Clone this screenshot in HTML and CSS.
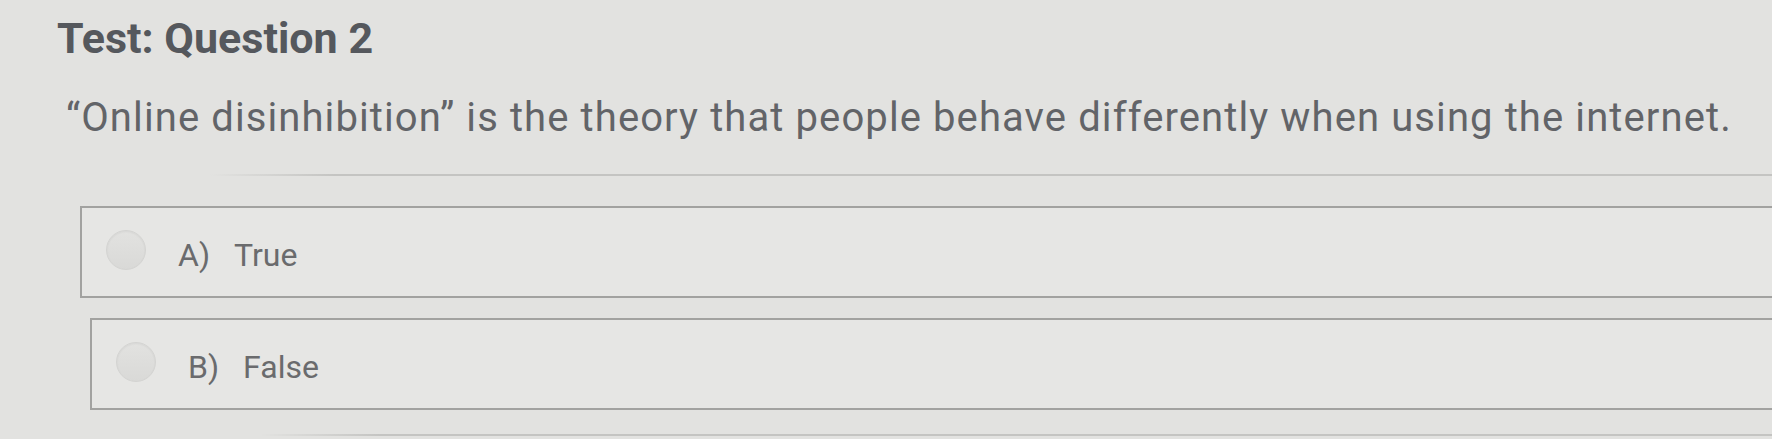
FILE: index.html
```html
<!DOCTYPE html>
<html lang="en">
<head>
    <meta charset="UTF-8">
    <meta name="viewport" content="width=device-width, initial-scale=1.0">
    <title>Test: Question 2</title>
    <link rel="stylesheet" href="styles.css">
</head>
<body>

    <div class="quiz">
        <h2 class="quiz-title">Test: Question 2</h2>
        <p class="question">“Online disinhibition” is the theory that people behave differently when using the internet.</p>
        <div class="rule"></div>

        <div class="answers">
            <label class="answer answer-a">
                <input type="radio" name="q2" value="A">
                <span class="radio"></span>
                <span class="letter">A)</span>
                <span class="answer-text">True</span>
            </label>
            <label class="answer answer-b">
                <input type="radio" name="q2" value="B">
                <span class="radio"></span>
                <span class="letter">B)</span>
                <span class="answer-text">False</span>
            </label>
        </div>
        <div class="rule rule-bottom"></div>
    </div>

</body>
</html>
```

FILE: styles.css
```css
body {
    font-family: Roboto, "Noto Sans", Arial, sans-serif;
    background-color: #e2e2e0;
    margin: 0;
    overflow: hidden;
}
.quiz {
    padding-top: 13px;
}
.quiz-title {
    margin: 0 0 0 57px;
    font-size: 43px;
    line-height: 50px;
    font-weight: 700;
    color: #55585d;
}
.question {
    margin: 31px 0 0 66px;
    font-size: 40px;
    line-height: 47px;
    letter-spacing: 1.1px;
    color: #626468;
    white-space: nowrap;
}
.rule {
    height: 2px;
    margin: 33px 0 0 210px;
    background: linear-gradient(to right, rgba(190, 190, 188, 0), #c4c4c2 8%);
}
.rule-bottom {
    margin: 24px 0 0 260px;
}
.answers {
    display: flex;
    flex-direction: column;
    gap: 20px;
    margin-top: 30px;
}
.answer {
    display: flex;
    align-items: center;
    height: 88px;
    padding-left: 24px;
    margin-right: -20px;
    background-color: #e6e6e4;
    border: 2px solid #a2a2a0;
    cursor: pointer;
}
.answer-a {
    margin-left: 80px;
}
.answer-b {
    margin-left: 90px;
}
.answer input {
    display: none;
}
.radio {
    width: 38px;
    height: 38px;
    border-radius: 50%;
    border: 1px solid #d4d4d2;
    background: linear-gradient(#e2e2e0, #d9d9d7);
    box-shadow: inset 0 1px 2px rgba(0, 0, 0, 0.05);
    flex-shrink: 0;
    margin-top: -4px;
}
.letter,
.answer-text {
    font-size: 32px;
    line-height: 38px;
    color: #6a6b6d;
    padding-top: 6px;
}
.letter {
    margin-left: 32px;
    margin-right: 24px;
}
```
